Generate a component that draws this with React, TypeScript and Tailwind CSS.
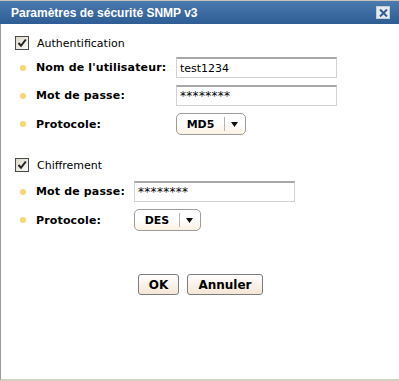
import React from "react";

function Check() {
  return (
    <div className="w-[14px] h-[14px] border border-[#4a4a4a] bg-gradient-to-br from-[#dcd8cc] to-[#fbfaf6] flex items-center justify-center">
      <svg width="10" height="10" viewBox="0 0 10 10">
        <path d="M1.5 5 L4 7.8 L8.8 1.5" fill="none" stroke="#222" strokeWidth="2" />
      </svg>
    </div>
  );
}

function Bullet() {
  return <div className="w-[6px] h-[6px] rounded-full bg-[#f7d774]" />;
}

function Row({ label, labelW, children }: { label: string; labelW: string; children: React.ReactNode }) {
  return (
    <div className="flex items-center pl-[19px]">
      <Bullet />
      <div className={`ml-[10px] font-bold text-[11px] leading-none tracking-[0.15px] text-black ${labelW}`}>{label}</div>
      {children}
    </div>
  );
}

function Input({ value, big }: { value: string; big?: boolean }) {
  return (
    <div className={`w-[161px] h-[21px] border border-[#d2d2d2] border-t-[#a8a8a8] border-t-2 bg-white flex items-center pl-[3px] ${big ? "text-[12px] tracking-[0.3px]" : "text-[11px]"} leading-none text-black`}>
      {value}
    </div>
  );
}

function Select({ value, w, sepLeft }: { value: string; w: string; sepLeft: string }) {
  return (
    <div className={`${w} h-[22px] rounded-[5px] border border-[#9c9c9c] bg-gradient-to-b from-white via-white to-[#fbf1e2] flex items-center`}>
      <div className={`${sepLeft} flex justify-center font-bold text-[11px] leading-none text-black`}>{value}</div>
      <div className="w-px h-[14px] bg-[#b4b4b4]" />
      <div className="flex-1 flex justify-center pr-[2px]">
        <svg width="7" height="5" viewBox="0 0 7 5">
          <path d="M0 0 H7 L3.5 5 Z" fill="#111" />
        </svg>
      </div>
    </div>
  );
}

function Btn({ children, w }: { children: React.ReactNode; w: string }) {
  return (
    <div className={`${w} h-[21px] rounded-[3px] border border-[#7c7c7c] bg-gradient-to-b from-white to-[#f4e6d5] flex items-center justify-center font-bold text-[12px] leading-none text-black`}>
      {children}
    </div>
  );
}

export default function App() {
  return (
    <div className="w-[399px] h-[381px] bg-white flex flex-col overflow-hidden" style={{ fontFamily: '"DejaVu Sans", Verdana, sans-serif' }}>
      <div className="h-px bg-[#c9c5bb]" />
      <div className="h-[23px] bg-gradient-to-b from-[#4b7aaf] to-[#2d5d94] flex items-center pl-[11px] pr-[9px]">
        <div className="flex-1 text-white font-bold text-[12px] leading-none" style={{ fontFamily: '"Liberation Sans", Arial, sans-serif' }}>
          Paramètres de sécurité SNMP v3
        </div>
        <div className="w-[14px] h-[13px] bg-[#e6ebf0] border border-[#c2ccd6] flex items-center justify-center">
          <svg width="9" height="8" viewBox="0 0 9 8">
            <path d="M1 0.5 L8 7.5 M8 0.5 L1 7.5" stroke="#2b5c9a" strokeWidth="2" />
          </svg>
        </div>
      </div>
      <div className="flex-1 border-l border-[#9a9a9a] border-b-2 border-b-[#d4d0c8] flex flex-col">
        <div className="mt-[12px] h-[14px] flex items-center pl-[14px]">
          <Check />
          <span className="ml-[8px] text-[11px] leading-none text-black">Authentification</span>
        </div>
        <div className="mt-[7px] flex flex-col gap-[7px]">
          <Row label="Nom de l'utilisateur:" labelW="w-[140px]">
            <Input value="test1234" />
          </Row>
          <Row label="Mot de passe:" labelW="w-[140px]">
            <Input value="********" big />
          </Row>
          <Row label="Protocole:" labelW="w-[140px]">
            <Select value="MD5" w="w-[70px]" sepLeft="w-[47px]" />
          </Row>
        </div>
        <div className="mt-[23px] h-[14px] flex items-center pl-[14px]">
          <Check />
          <span className="ml-[8px] text-[11px] leading-none text-black">Chiffrement</span>
        </div>
        <div className="mt-[9px] flex flex-col gap-[7px]">
          <Row label="Mot de passe:" labelW="w-[98px]">
            <Input value="********" big />
          </Row>
          <Row label="Protocole:" labelW="w-[98px]">
            <Select value="DES" w="w-[67px]" sepLeft="w-[44px]" />
          </Row>
        </div>
        <div className="mt-[43px] flex pl-[137px] gap-[8px]">
          <Btn w="w-[41px]">OK</Btn>
          <Btn w="w-[76px]">Annuler</Btn>
        </div>
      </div>
    </div>
  );
}
